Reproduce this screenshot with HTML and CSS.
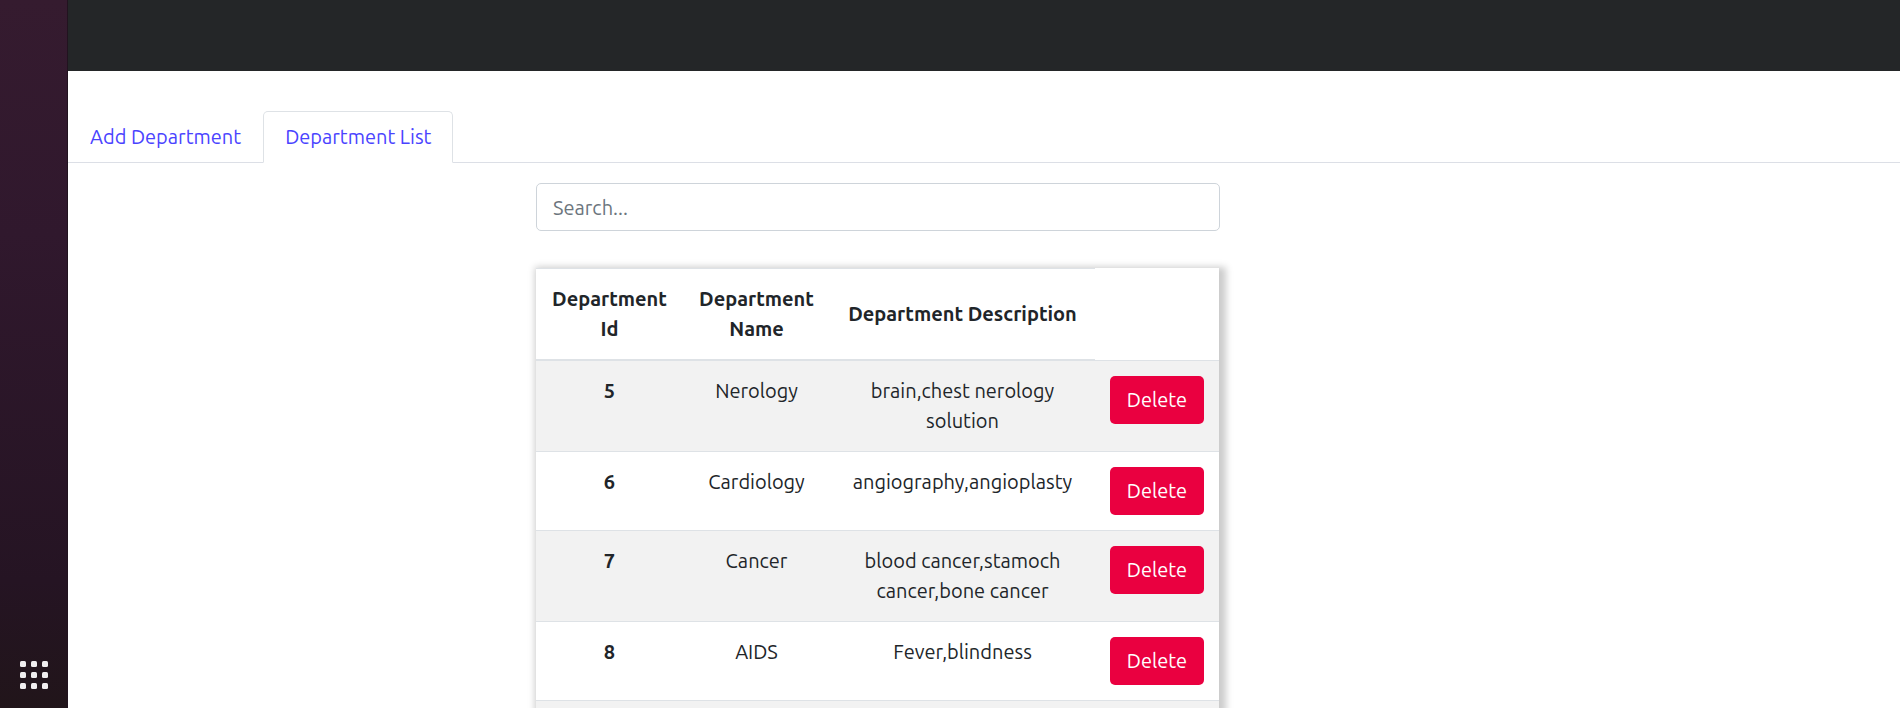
FILE: index.html
```html
<!DOCTYPE html>
<html lang="en">
<head>
<meta charset="utf-8">
<title>Department List</title>
<link rel="stylesheet" href="styles.css">
</head>
<body>
<div class="desktop">
  <aside class="dock">
    <button class="dock-apps" type="button" aria-label="Show applications">
      <svg width="28" height="28" viewBox="0 0 28 28" fill="#f0eeef" aria-hidden="true">
        <rect x="0" y="0" width="6" height="6" rx="1.5"/><rect x="11" y="0" width="6" height="6" rx="1.5"/><rect x="22" y="0" width="6" height="6" rx="1.5"/>
        <rect x="0" y="11" width="6" height="6" rx="1.5"/><rect x="11" y="11" width="6" height="6" rx="1.5"/><rect x="22" y="11" width="6" height="6" rx="1.5"/>
        <rect x="0" y="22" width="6" height="6" rx="1.5"/><rect x="11" y="22" width="6" height="6" rx="1.5"/><rect x="22" y="22" width="6" height="6" rx="1.5"/>
      </svg>
    </button>
  </aside>
  <div class="page">
    <header class="topbar"></header>
    <nav class="tabs">
      <a class="tab" href="#add">Add Department</a>
      <a class="tab tab-active" href="#list" aria-current="page">Department List</a>
    </nav>
    <main class="layout">
      <section class="panel">
        <input class="search" type="search" placeholder="Search..." aria-label="Search departments">
        <table class="departments">
          <colgroup><col class="col-id"><col class="col-name"><col class="col-text"><col class="col-action"></colgroup>
          <thead>
            <tr><th scope="col">Department Id</th><th scope="col">Department Name</th><th scope="col">Department Description</th><td></td></tr>
          </thead>
          <tbody>
            <tr><th scope="row">5</th><td>Nerology</td><td>brain,chest nerology solution</td><td><button class="delete" type="button">Delete</button></td></tr>
            <tr><th scope="row">6</th><td>Cardiology</td><td>angiography,angioplasty</td><td><button class="delete" type="button">Delete</button></td></tr>
            <tr><th scope="row">7</th><td>Cancer</td><td>blood cancer,stamoch cancer,bone cancer</td><td><button class="delete" type="button">Delete</button></td></tr>
            <tr><th scope="row">8</th><td>AIDS</td><td>Fever,blindness</td><td><button class="delete" type="button">Delete</button></td></tr>
            <tr class="row-empty"><td colspan="4"></td></tr>
          </tbody>
        </table>
      </section>
    </main>
  </div>
</div>
</body>
</html>
```
FILE: styles.css
```css
* { box-sizing: border-box; }

body {
  margin: 0;
  background: #fff;
  color: #212529;
  font: 20px/30px Ubuntu, "Noto Sans", sans-serif;
}

.desktop {
  display: flex;
  height: 100vh;
  overflow: hidden;
}

.dock {
  display: flex;
  flex: 0 0 68px;
  align-items: flex-end;
  justify-content: center;
  padding-bottom: 19px;
  border-right: 1px solid #21131f;
  background: linear-gradient(#351b2f 0%, #30182d 33%, #251423 82%, #21151a 100%);
}

.dock-apps {
  display: flex;
  padding: 0;
  border: 0;
  background: none;
}

.page {
  flex: 1;
  min-width: 0;
}

.topbar {
  height: 71px;
  background: #242628;
}

.tabs {
  display: flex;
  margin-top: 40px;
  border-bottom: 1px solid #dcdfe6;
}

.tab {
  margin-bottom: -1px;
  padding: 10px 21px;
  border: 1px solid transparent;
  border-radius: 5px 5px 0 0;
  color: #4a43ff;
  text-decoration: none;
}

.tab-active {
  border-color: #dee2e6 #dee2e6 #fff;
  background: #fff;
}

.layout {
  display: grid;
  grid-template-columns: 468fr 684fr 680fr;
  padding-top: 20px;
}

.panel {
  grid-column: 2;
  min-width: 0;
}

.search {
  display: block;
  width: 100%;
  height: 48px;
  padding: 0 16px;
  border: 1px solid #ced4da;
  border-radius: 5px;
  background: #fff;
  color: inherit;
  font: inherit;
  appearance: none;
}

.search::placeholder {
  color: #6c757d;
  opacity: 1;
}

.departments {
  width: calc(100% - 1px);
  margin-top: 37px;
  border-spacing: 0;
  table-layout: fixed;
  background: #fff;
  text-align: center;
  box-shadow: 3px 3px 7px 4px #ccc;
}

.col-id, .col-name { width: 147px; }
.col-action { width: 124px; }

.departments th,
.departments td {
  padding: 15px;
  border-bottom: 1px solid #dee2e6;
  vertical-align: top;
}

.departments thead th {
  border-top: 1px solid #dee2e6;
  border-bottom-width: 2px;
  vertical-align: middle;
}

.departments tbody tr:nth-child(odd) { background: #f2f2f2; }

.row-empty { height: 91px; }

.delete {
  display: block;
  width: 100%;
  height: 48px;
  padding: 0;
  border: 0;
  border-radius: 5px;
  background: #ea0040;
  color: #fff;
  font: inherit;
}
```
